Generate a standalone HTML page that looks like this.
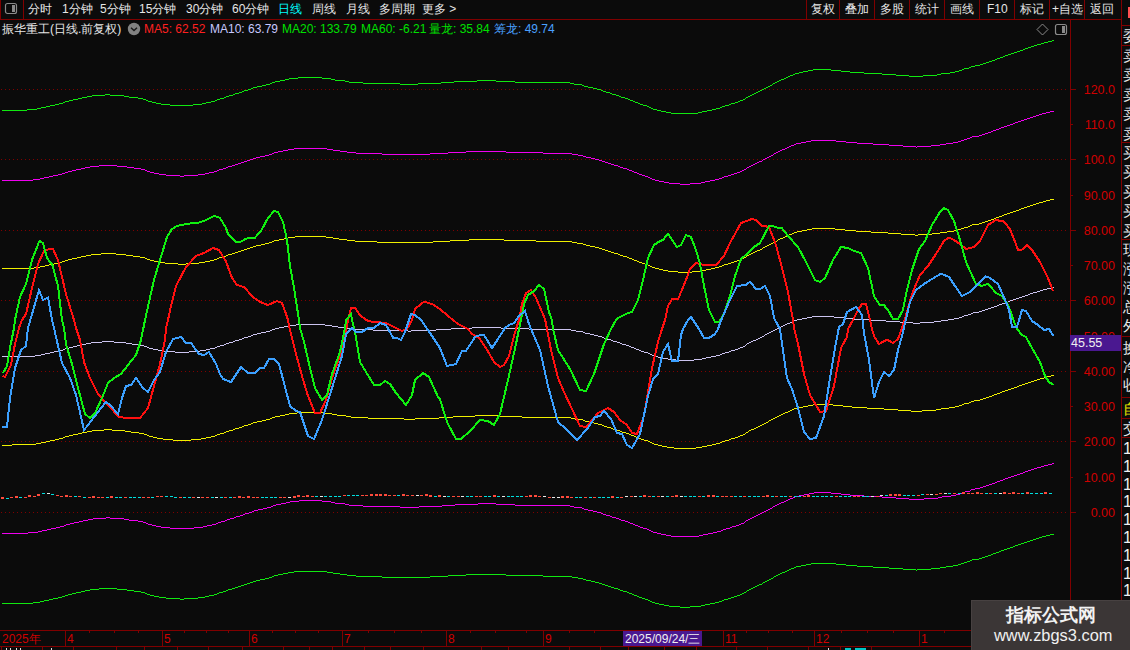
<!DOCTYPE html>
<html><head><meta charset="utf-8">
<style>
*{margin:0;padding:0;box-sizing:border-box}
html,body{width:1130px;height:650px;overflow:hidden;background:#0b0b0b;font-family:"Liberation Sans",sans-serif;font-size:12px;color:#e6e6e6;position:relative}
.abs{position:absolute;white-space:nowrap;line-height:1}
.hl{position:absolute;height:1px;background:#800000}
.vl{position:absolute;width:1px;background:#800000}
.ax{position:absolute;color:#d00000;font-size:12.5px;line-height:1;white-space:nowrap}
</style></head><body>
<svg width="1130" height="650" style="position:absolute;left:0;top:0">
<defs><pattern id="dots" x="1" y="0" width="4" height="1" patternUnits="userSpaceOnUse"><rect width="1" height="1" fill="#800000"/></pattern></defs><g>
<rect x="1" y="89" width="1066" height="1" fill="url(#dots)"/>
<rect x="1" y="159" width="1066" height="1" fill="url(#dots)"/>
<rect x="1" y="230" width="1066" height="1" fill="url(#dots)"/>
<rect x="1" y="300" width="1066" height="1" fill="url(#dots)"/>
<rect x="1" y="371" width="1066" height="1" fill="url(#dots)"/>
<rect x="1" y="441" width="1066" height="1" fill="url(#dots)"/>
<rect x="1" y="512" width="1066" height="1" fill="url(#dots)"/>
</g>
<g fill="#800000">
<rect x="1071" y="89" width="5" height="1"/>
<rect x="1071" y="124" width="2" height="1"/>
<rect x="1071" y="159" width="5" height="1"/>
<rect x="1071" y="195" width="2" height="1"/>
<rect x="1071" y="230" width="5" height="1"/>
<rect x="1071" y="265" width="2" height="1"/>
<rect x="1071" y="300" width="5" height="1"/>
<rect x="1071" y="336" width="2" height="1"/>
<rect x="1071" y="371" width="5" height="1"/>
<rect x="1071" y="406" width="2" height="1"/>
<rect x="1071" y="441" width="5" height="1"/>
<rect x="1071" y="477" width="2" height="1"/>
<rect x="1071" y="512" width="5" height="1"/>
</g>
<path d="M2 110.5h25M27 109.5h10M37 108.5h4M41 107.5h5M46 106.5h4M50 105.5h5M55 104.5h4M59 103.5h4M63 102.5h2M65 101.5h4M69 100.5h4M73 99.5h5M78 98.5h4M82 97.5h5M87 96.5h5M92 95.5h13M105 94.5h5M110 95.5h14M124 96.5h5M129 97.5h9M138 98.5h5M143 99.5h3M146 100.5h2M148 101.5h4M152 102.5h4M156 103.5h5M161 104.5h9M170 105.5h23M193 104.5h9M202 103.5h4M206 102.5h5M211 101.5h4M215 100.5h2M217 99.5h3M220 98.5h4M224 97.5h2M226 96.5h3M229 95.5h4M233 94.5h2M235 93.5h4M239 92.5h3M242 91.5h2M244 90.5h4M248 89.5h3M251 88.5h2M253 87.5h4M257 86.5h5M262 85.5h4M266 84.5h4M270 83.5h2M272 82.5h3M275 81.5h5M280 80.5h5M285 79.5h4M289 78.5h9M298 77.5h24M322 78.5h9M331 79.5h4M335 80.5h10M345 81.5h4M349 82.5h14M363 83.5h37M400 84.5h18M418 83.5h23M441 82.5h13M454 81.5h23M477 80.5h19M496 81.5h19M515 82.5h55M570 83.5h4M574 84.5h8M582 85.5h2M584 86.5h4M588 87.5h5M593 88.5h4M597 89.5h4M601 90.5h2M603 91.5h3M606 92.5h4M610 93.5h2M612 94.5h4M616 95.5h3M619 96.5h2M621 97.5h4M625 98.5h3M628 99.5h2M630 100.5h3M633 101.5h2M635 102.5h3M638 103.5h2M640 104.5h3M643 105.5h4M647 106.5h2M649 107.5h2M651 108.5h2M653 109.5h4M657 110.5h4M661 111.5h5M666 112.5h5M671 113.5h27M698 112.5h4M702 111.5h5M707 110.5h5M712 109.5h4M716 108.5h4M720 107.5h2M722 106.5h3M725 105.5h4M729 104.5h2M731 103.5h4M735 102.5h3M738 101.5h2M740 100.5h3M743 99.5h2M745 98.5h1M746 97.5h2M748 96.5h2M750 95.5h2M752 94.5h2M754 93.5h2M756 92.5h2M758 91.5h2M760 90.5h2M762 89.5h2M764 88.5h2M766 87.5h2M768 86.5h2M770 85.5h2M772 84.5h1M773 83.5h2M775 82.5h2M777 81.5h2M779 80.5h2M781 79.5h3M784 78.5h2M786 77.5h2M788 76.5h2M790 75.5h3M793 74.5h2M795 73.5h4M799 72.5h4M803 71.5h5M808 70.5h5M813 69.5h18M831 70.5h10M841 71.5h9M850 72.5h14M864 73.5h18M882 74.5h14M896 75.5h13M909 76.5h14M923 75.5h14M937 74.5h4M941 73.5h9M950 72.5h5M955 71.5h4M959 70.5h3M962 69.5h2M964 68.5h5M969 67.5h2M971 66.5h4M975 65.5h5M980 64.5h3M983 63.5h3M986 62.5h3M989 61.5h3M992 60.5h3M995 59.5h2M997 58.5h3M1000 57.5h3M1003 56.5h2M1005 55.5h3M1008 54.5h3M1011 53.5h3M1014 52.5h3M1017 51.5h3M1020 50.5h3M1023 49.5h2M1025 48.5h3M1028 47.5h3M1031 46.5h3M1034 45.5h3M1037 44.5h4M1041 43.5h3M1044 42.5h4M1048 41.5h4M1052 40.5h2" stroke="#10e810" stroke-width="1" fill="none" shape-rendering="crispEdges"/>
<path d="M2 180.5h31M33 179.5h7M40 178.5h4M44 177.5h5M49 176.5h4M53 175.5h5M58 174.5h4M62 173.5h3M65 172.5h3M68 171.5h4M72 170.5h4M76 169.5h5M81 168.5h4M85 167.5h5M90 166.5h9M99 165.5h18M117 166.5h10M127 167.5h7M134 168.5h7M141 169.5h4M145 170.5h2M147 171.5h3M150 172.5h4M154 173.5h5M159 174.5h7M166 175.5h14M180 176.5h4M184 175.5h14M198 174.5h7M205 173.5h4M209 172.5h5M214 171.5h3M217 170.5h2M219 169.5h4M223 168.5h3M226 167.5h2M228 166.5h4M232 165.5h3M235 164.5h3M238 163.5h3M241 162.5h3M244 161.5h3M247 160.5h3M250 159.5h3M253 158.5h3M256 157.5h4M260 156.5h5M265 155.5h4M269 154.5h3M272 153.5h2M274 152.5h4M278 151.5h5M283 150.5h5M288 149.5h6M294 148.5h33M327 149.5h6M333 150.5h7M340 151.5h7M347 152.5h9M356 153.5h26M382 154.5h48M430 153.5h18M448 152.5h18M466 151.5h40M506 152.5h37M543 153.5h29M572 154.5h6M578 155.5h5M583 156.5h3M586 157.5h5M591 158.5h4M595 159.5h4M599 160.5h3M602 161.5h3M605 162.5h3M608 163.5h3M611 164.5h3M614 165.5h4M618 166.5h2M620 167.5h3M623 168.5h4M627 169.5h2M629 170.5h3M632 171.5h2M634 172.5h3M637 173.5h2M639 174.5h3M642 175.5h3M645 176.5h3M648 177.5h2M650 178.5h2M652 179.5h3M655 180.5h4M659 181.5h5M664 182.5h5M669 183.5h11M680 184.5h10M690 183.5h11M701 182.5h4M705 181.5h5M710 180.5h5M715 179.5h4M719 178.5h3M722 177.5h2M724 176.5h4M728 175.5h3M731 174.5h3M734 173.5h3M737 172.5h3M740 171.5h2M742 170.5h2M744 169.5h2M746 168.5h1M747 167.5h2M749 166.5h2M751 165.5h2M753 164.5h2M755 163.5h2M757 162.5h2M759 161.5h3M762 160.5h1M763 159.5h2M765 158.5h2M767 157.5h2M769 156.5h2M771 155.5h2M773 154.5h1M774 153.5h2M776 152.5h2M778 151.5h2M780 150.5h2M782 149.5h3M785 148.5h2M787 147.5h2M789 146.5h2M791 145.5h3M794 144.5h2M796 143.5h5M801 142.5h5M806 141.5h5M811 140.5h25M836 141.5h10M846 142.5h11M857 143.5h16M873 144.5h16M889 145.5h14M903 146.5h13M916 147.5h1M917 146.5h14M931 145.5h9M940 144.5h6M946 143.5h7M953 142.5h5M958 141.5h3M961 140.5h3M964 139.5h3M967 138.5h3M970 137.5h2M972 136.5h7M979 135.5h3M982 134.5h3M985 133.5h3M988 132.5h3M991 131.5h2M993 130.5h3M996 129.5h3M999 128.5h2M1001 127.5h3M1004 126.5h3M1007 125.5h3M1010 124.5h3M1013 123.5h2M1015 122.5h3M1018 121.5h3M1021 120.5h3M1024 119.5h3M1027 118.5h3M1030 117.5h3M1033 116.5h3M1036 115.5h3M1039 114.5h3M1042 113.5h4M1046 112.5h4M1050 111.5h4" stroke="#f000f0" stroke-width="1" fill="none" shape-rendering="crispEdges"/>
<path d="M2 268.5h32M34 267.5h6M40 266.5h5M45 265.5h4M49 264.5h5M54 263.5h4M58 262.5h4M62 261.5h3M65 260.5h3M68 259.5h4M72 258.5h5M77 257.5h4M81 256.5h5M86 255.5h5M91 254.5h10M101 253.5h15M116 254.5h10M126 255.5h7M133 256.5h7M140 257.5h5M145 258.5h2M147 259.5h3M150 260.5h4M154 261.5h4M158 262.5h7M165 263.5h13M178 264.5h8M186 263.5h13M199 262.5h6M205 261.5h5M210 260.5h4M214 259.5h3M217 258.5h2M219 257.5h4M223 256.5h3M226 255.5h2M228 254.5h4M232 253.5h3M235 252.5h3M238 251.5h3M241 250.5h3M244 249.5h3M247 248.5h3M250 247.5h3M253 246.5h3M256 245.5h5M261 244.5h4M265 243.5h4M269 242.5h3M272 241.5h2M274 240.5h5M279 239.5h5M284 238.5h4M288 237.5h7M295 236.5h31M326 237.5h7M333 238.5h6M339 239.5h8M347 240.5h8M355 241.5h22M377 242.5h56M433 241.5h17M450 240.5h19M469 239.5h35M504 240.5h32M536 241.5h36M572 242.5h5M577 243.5h6M583 244.5h3M586 245.5h4M590 246.5h5M595 247.5h4M599 248.5h3M602 249.5h3M605 250.5h3M608 251.5h3M611 252.5h3M614 253.5h4M618 254.5h2M620 255.5h3M623 256.5h4M627 257.5h2M629 258.5h3M632 259.5h2M634 260.5h3M637 261.5h2M639 262.5h3M642 263.5h3M645 264.5h3M648 265.5h2M650 266.5h2M652 267.5h3M655 268.5h4M659 269.5h4M663 270.5h5M668 271.5h10M678 272.5h14M692 271.5h9M701 270.5h5M706 269.5h5M711 268.5h4M715 267.5h4M719 266.5h3M722 265.5h2M724 264.5h4M728 263.5h3M731 262.5h3M734 261.5h3M737 260.5h3M740 259.5h2M742 258.5h2M744 257.5h2M746 256.5h1M747 255.5h2M749 254.5h2M751 253.5h2M753 252.5h2M755 251.5h2M757 250.5h3M760 249.5h2M762 248.5h1M763 247.5h2M765 246.5h2M767 245.5h2M769 244.5h2M771 243.5h2M773 242.5h2M775 241.5h2M777 240.5h1M778 239.5h2M780 238.5h3M783 237.5h2M785 236.5h2M787 235.5h2M789 234.5h3M792 233.5h2M794 232.5h3M797 231.5h5M802 230.5h5M807 229.5h5M812 228.5h23M835 229.5h10M845 230.5h11M856 231.5h15M871 232.5h17M888 233.5h13M901 234.5h14M915 235.5h3M918 234.5h14M932 233.5h8M940 232.5h7M947 231.5h7M954 230.5h4M958 229.5h3M961 228.5h3M964 227.5h4M968 226.5h2M970 225.5h2M972 224.5h7M979 223.5h3M982 222.5h3M985 221.5h3M988 220.5h3M991 219.5h3M994 218.5h2M996 217.5h3M999 216.5h3M1002 215.5h2M1004 214.5h3M1007 213.5h3M1010 212.5h3M1013 211.5h3M1016 210.5h3M1019 209.5h2M1021 208.5h3M1024 207.5h3M1027 206.5h3M1030 205.5h3M1033 204.5h3M1036 203.5h3M1039 202.5h4M1043 201.5h3M1046 200.5h4M1050 199.5h4" stroke="#f0f000" stroke-width="1" fill="none" shape-rendering="crispEdges"/>
<path d="M2 356.5h33M35 355.5h6M41 354.5h4M45 353.5h5M50 352.5h4M54 351.5h5M59 350.5h4M63 349.5h2M65 348.5h4M69 347.5h4M73 346.5h4M77 345.5h5M82 344.5h4M86 343.5h5M91 342.5h11M102 341.5h12M114 342.5h12M126 343.5h6M132 344.5h8M140 345.5h4M144 346.5h3M147 347.5h2M149 348.5h4M153 349.5h5M158 350.5h6M164 351.5h11M175 352.5h14M189 351.5h11M200 350.5h6M206 349.5h4M210 348.5h5M215 347.5h2M217 346.5h3M220 345.5h4M224 344.5h2M226 343.5h3M229 342.5h4M233 341.5h2M235 340.5h4M239 339.5h3M242 338.5h2M244 337.5h4M248 336.5h3M251 335.5h2M253 334.5h4M257 333.5h4M261 332.5h5M266 331.5h4M270 330.5h2M272 329.5h3M275 328.5h4M279 327.5h5M284 326.5h5M289 325.5h7M296 324.5h29M325 325.5h7M332 326.5h6M338 327.5h8M346 328.5h7M353 329.5h20M373 330.5h35M408 331.5h3M411 330.5h25M436 329.5h15M451 328.5h21M472 327.5h29M501 328.5h28M529 329.5h42M571 330.5h5M576 331.5h7M583 332.5h2M585 333.5h5M590 334.5h4M594 335.5h4M598 336.5h4M602 337.5h2M604 338.5h3M607 339.5h4M611 340.5h2M613 341.5h4M617 342.5h3M620 343.5h2M622 344.5h4M626 345.5h3M629 346.5h2M631 347.5h3M634 348.5h2M636 349.5h3M639 350.5h2M641 351.5h3M644 352.5h4M648 353.5h2M650 354.5h2M652 355.5h2M654 356.5h4M658 357.5h5M663 358.5h5M668 359.5h8M676 360.5h18M694 359.5h8M702 358.5h4M706 357.5h5M711 356.5h5M716 355.5h4M720 354.5h2M722 353.5h3M725 352.5h4M729 351.5h2M731 350.5h4M735 349.5h3M738 348.5h2M740 347.5h3M743 346.5h2M745 345.5h1M746 344.5h1M747 343.5h2M749 342.5h2M751 341.5h2M753 340.5h3M756 339.5h2M758 338.5h2M760 337.5h2M762 336.5h2M764 335.5h1M765 334.5h2M767 333.5h2M769 332.5h2M771 331.5h2M773 330.5h2M775 329.5h2M777 328.5h2M779 327.5h2M781 326.5h2M783 325.5h2M785 324.5h2M787 323.5h3M790 322.5h2M792 321.5h2M794 320.5h3M797 319.5h5M802 318.5h5M807 317.5h5M812 316.5h22M834 317.5h10M844 318.5h10M854 319.5h15M869 320.5h17M886 321.5h14M900 322.5h13M913 323.5h7M920 322.5h14M934 321.5h7M941 320.5h7M948 319.5h6M954 318.5h5M959 317.5h3M962 316.5h2M964 315.5h4M968 314.5h3M971 313.5h2M973 312.5h6M979 311.5h3M982 310.5h3M985 309.5h3M988 308.5h3M991 307.5h3M994 306.5h3M997 305.5h2M999 304.5h3M1002 303.5h3M1005 302.5h3M1008 301.5h2M1010 300.5h3M1013 299.5h3M1016 298.5h3M1019 297.5h3M1022 296.5h3M1025 295.5h3M1028 294.5h2M1030 293.5h3M1033 292.5h4M1037 291.5h3M1040 290.5h3M1043 289.5h4M1047 288.5h4M1051 287.5h3" stroke="#ccc4f0" stroke-width="1" fill="none" shape-rendering="crispEdges"/>
<path d="M2 445.5h10M12 444.5h24M36 443.5h5M41 442.5h5M46 441.5h4M50 440.5h5M55 439.5h4M59 438.5h4M63 437.5h2M65 436.5h4M69 435.5h4M73 434.5h5M78 433.5h4M82 432.5h5M87 431.5h5M92 430.5h12M104 429.5h8M112 430.5h13M125 431.5h6M131 432.5h8M139 433.5h5M144 434.5h3M147 435.5h2M149 436.5h4M153 437.5h4M157 438.5h6M163 439.5h10M173 440.5h18M191 439.5h10M201 438.5h5M206 437.5h5M211 436.5h4M215 435.5h2M217 434.5h3M220 433.5h4M224 432.5h2M226 431.5h3M229 430.5h4M233 429.5h2M235 428.5h4M239 427.5h3M242 426.5h2M244 425.5h4M248 424.5h3M251 423.5h2M253 422.5h4M257 421.5h5M262 420.5h4M266 419.5h4M270 418.5h2M272 417.5h3M275 416.5h5M280 415.5h5M285 414.5h4M289 413.5h8M297 412.5h27M324 413.5h8M332 414.5h5M337 415.5h9M346 416.5h5M351 417.5h17M368 418.5h36M404 419.5h11M415 418.5h24M439 417.5h14M453 416.5h22M475 415.5h24M499 416.5h23M522 417.5h49M571 418.5h4M575 419.5h8M583 420.5h2M585 421.5h4M589 422.5h5M594 423.5h4M598 424.5h4M602 425.5h2M604 426.5h3M607 427.5h4M611 428.5h2M613 429.5h4M617 430.5h3M620 431.5h2M622 432.5h4M626 433.5h3M629 434.5h2M631 435.5h3M634 436.5h2M636 437.5h3M639 438.5h2M641 439.5h3M644 440.5h4M648 441.5h2M650 442.5h2M652 443.5h2M654 444.5h4M658 445.5h4M662 446.5h5M667 447.5h7M674 448.5h22M696 447.5h6M702 446.5h5M707 445.5h5M712 444.5h4M716 443.5h4M720 442.5h2M722 441.5h3M725 440.5h4M729 439.5h2M731 438.5h4M735 437.5h3M738 436.5h2M740 435.5h3M743 434.5h2M745 433.5h1M746 432.5h2M748 431.5h1M749 430.5h2M751 429.5h3M754 428.5h2M756 427.5h2M758 426.5h2M760 425.5h2M762 424.5h2M764 423.5h2M766 422.5h2M768 421.5h1M769 420.5h2M771 419.5h2M773 418.5h2M775 417.5h2M777 416.5h2M779 415.5h2M781 414.5h2M783 413.5h2M785 412.5h3M788 411.5h2M790 410.5h2M792 409.5h2M794 408.5h4M798 407.5h5M803 406.5h5M808 405.5h5M813 404.5h20M833 405.5h10M843 406.5h9M852 407.5h15M867 408.5h17M884 409.5h14M898 410.5h13M911 411.5h11M922 410.5h14M936 409.5h5M941 408.5h8M949 407.5h6M955 406.5h4M959 405.5h3M962 404.5h2M964 403.5h5M969 402.5h2M971 401.5h3M974 400.5h6M980 399.5h3M983 398.5h3M986 397.5h3M989 396.5h3M992 395.5h2M994 394.5h3M997 393.5h3M1000 392.5h2M1002 391.5h3M1005 390.5h3M1008 389.5h3M1011 388.5h3M1014 387.5h3M1017 386.5h2M1019 385.5h3M1022 384.5h3M1025 383.5h3M1028 382.5h3M1031 381.5h3M1034 380.5h3M1037 379.5h3M1040 378.5h4M1044 377.5h3M1047 376.5h4M1051 375.5h3" stroke="#f0f000" stroke-width="1" fill="none" shape-rendering="crispEdges"/>
<path d="M2 533.5h26M28 532.5h10M38 531.5h4M42 530.5h5M47 529.5h4M51 528.5h5M56 527.5h4M60 526.5h4M64 525.5h2M66 524.5h4M70 523.5h4M74 522.5h5M79 521.5h4M83 520.5h5M88 519.5h5M93 518.5h13M106 517.5h4M110 518.5h14M124 519.5h5M129 520.5h9M138 521.5h5M143 522.5h3M146 523.5h2M148 524.5h4M152 525.5h4M156 526.5h5M161 527.5h9M170 528.5h24M194 527.5h9M203 526.5h4M207 525.5h5M212 524.5h4M216 523.5h2M218 522.5h3M221 521.5h4M225 520.5h2M227 519.5h3M230 518.5h4M234 517.5h2M236 516.5h4M240 515.5h3M243 514.5h2M245 513.5h4M249 512.5h3M252 511.5h2M254 510.5h4M258 509.5h5M263 508.5h4M267 507.5h4M271 506.5h2M273 505.5h3M276 504.5h5M281 503.5h5M286 502.5h4M290 501.5h9M299 500.5h23M322 501.5h9M331 502.5h4M335 503.5h10M345 504.5h4M349 505.5h14M363 506.5h37M400 507.5h19M419 506.5h23M442 505.5h13M455 504.5h23M478 503.5h18M496 504.5h19M515 505.5h55M570 506.5h4M574 507.5h8M582 508.5h2M584 509.5h4M588 510.5h5M593 511.5h4M597 512.5h4M601 513.5h2M603 514.5h3M606 515.5h4M610 516.5h2M612 517.5h4M616 518.5h3M619 519.5h2M621 520.5h4M625 521.5h3M628 522.5h2M630 523.5h3M633 524.5h2M635 525.5h3M638 526.5h2M640 527.5h3M643 528.5h4M647 529.5h2M649 530.5h2M651 531.5h2M653 532.5h4M657 533.5h4M661 534.5h5M666 535.5h5M671 536.5h28M699 535.5h4M703 534.5h5M708 533.5h5M713 532.5h4M717 531.5h4M721 530.5h2M723 529.5h3M726 528.5h4M730 527.5h2M732 526.5h4M736 525.5h3M739 524.5h2M741 523.5h3M744 522.5h1M745 521.5h1M746 520.5h2M748 519.5h2M750 518.5h2M752 517.5h2M754 516.5h2M756 515.5h2M758 514.5h2M760 513.5h2M762 512.5h2M764 511.5h2M766 510.5h2M768 509.5h2M770 508.5h2M772 507.5h1M773 506.5h2M775 505.5h2M777 504.5h2M779 503.5h2M781 502.5h3M784 501.5h2M786 500.5h2M788 499.5h2M790 498.5h3M793 497.5h2M795 496.5h4M799 495.5h5M804 494.5h5M809 493.5h5M814 492.5h17M831 493.5h10M841 494.5h9M850 495.5h14M864 496.5h18M882 497.5h14M896 498.5h13M909 499.5h15M924 498.5h14M938 497.5h4M942 496.5h9M951 495.5h5M956 494.5h4M960 493.5h3M963 492.5h2M965 491.5h5M970 490.5h1M971 489.5h4M975 488.5h5M980 487.5h3M983 486.5h3M986 485.5h3M989 484.5h3M992 483.5h3M995 482.5h2M997 481.5h3M1000 480.5h3M1003 479.5h2M1005 478.5h3M1008 477.5h3M1011 476.5h3M1014 475.5h3M1017 474.5h3M1020 473.5h3M1023 472.5h2M1025 471.5h3M1028 470.5h3M1031 469.5h3M1034 468.5h3M1037 467.5h4M1041 466.5h3M1044 465.5h4M1048 464.5h4M1052 463.5h2" stroke="#f000f0" stroke-width="1" fill="none" shape-rendering="crispEdges"/>
<path d="M2 603.5h31M33 602.5h7M40 601.5h4M44 600.5h5M49 599.5h4M53 598.5h5M58 597.5h4M62 596.5h3M65 595.5h3M68 594.5h4M72 593.5h4M76 592.5h5M81 591.5h4M85 590.5h5M90 589.5h9M99 588.5h18M117 589.5h10M127 590.5h7M134 591.5h7M141 592.5h4M145 593.5h2M147 594.5h3M150 595.5h4M154 596.5h5M159 597.5h7M166 598.5h14M180 599.5h4M184 598.5h14M198 597.5h7M205 596.5h4M209 595.5h5M214 594.5h3M217 593.5h2M219 592.5h4M223 591.5h3M226 590.5h2M228 589.5h4M232 588.5h3M235 587.5h3M238 586.5h3M241 585.5h3M244 584.5h3M247 583.5h3M250 582.5h3M253 581.5h3M256 580.5h4M260 579.5h5M265 578.5h4M269 577.5h3M272 576.5h2M274 575.5h4M278 574.5h5M283 573.5h5M288 572.5h6M294 571.5h33M327 572.5h6M333 573.5h7M340 574.5h7M347 575.5h9M356 576.5h26M382 577.5h48M430 576.5h18M448 575.5h18M466 574.5h40M506 575.5h37M543 576.5h29M572 577.5h6M578 578.5h5M583 579.5h3M586 580.5h5M591 581.5h4M595 582.5h4M599 583.5h3M602 584.5h3M605 585.5h3M608 586.5h3M611 587.5h3M614 588.5h4M618 589.5h2M620 590.5h3M623 591.5h4M627 592.5h2M629 593.5h3M632 594.5h2M634 595.5h3M637 596.5h2M639 597.5h3M642 598.5h3M645 599.5h3M648 600.5h2M650 601.5h2M652 602.5h3M655 603.5h4M659 604.5h5M664 605.5h5M669 606.5h11M680 607.5h10M690 606.5h11M701 605.5h4M705 604.5h5M710 603.5h5M715 602.5h4M719 601.5h3M722 600.5h2M724 599.5h4M728 598.5h3M731 597.5h3M734 596.5h3M737 595.5h3M740 594.5h2M742 593.5h2M744 592.5h2M746 591.5h1M747 590.5h2M749 589.5h2M751 588.5h2M753 587.5h2M755 586.5h2M757 585.5h2M759 584.5h3M762 583.5h1M763 582.5h2M765 581.5h2M767 580.5h2M769 579.5h2M771 578.5h2M773 577.5h1M774 576.5h2M776 575.5h2M778 574.5h2M780 573.5h2M782 572.5h3M785 571.5h2M787 570.5h2M789 569.5h2M791 568.5h3M794 567.5h2M796 566.5h5M801 565.5h5M806 564.5h5M811 563.5h25M836 564.5h10M846 565.5h11M857 566.5h16M873 567.5h16M889 568.5h14M903 569.5h13M916 570.5h1M917 569.5h14M931 568.5h9M940 567.5h6M946 566.5h7M953 565.5h5M958 564.5h3M961 563.5h3M964 562.5h3M967 561.5h3M970 560.5h2M972 559.5h7M979 558.5h3M982 557.5h3M985 556.5h3M988 555.5h3M991 554.5h2M993 553.5h3M996 552.5h3M999 551.5h2M1001 550.5h3M1004 549.5h3M1007 548.5h3M1010 547.5h3M1013 546.5h2M1015 545.5h3M1018 544.5h3M1021 543.5h3M1024 542.5h3M1027 541.5h3M1030 540.5h3M1033 539.5h3M1036 538.5h3M1039 537.5h3M1042 536.5h4M1046 535.5h4M1050 534.5h4" stroke="#10e810" stroke-width="1" fill="none" shape-rendering="crispEdges"/>
<polyline points="2.4,376.0 5.0,377.0 11.0,365.0 15.0,344.0 19.0,328.0 22.0,320.0 26.0,314.0 32.0,288.0 38.0,264.0 44.0,251.0 50.0,248.6 53.0,249.0 58.0,260.0 66.0,294.0 74.0,320.0 76.0,328.0 80.0,340.0 84.0,362.0 90.0,378.0 98.0,394.0 106.0,403.0 119.0,417.0 130.0,418.4 140.0,418.0 148.0,408.0 154.0,386.0 160.0,364.0 165.0,340.0 166.0,328.0 168.0,320.0 171.0,306.0 176.0,286.0 186.0,267.0 196.0,256.0 204.0,253.0 213.0,248.0 219.0,250.0 226.0,261.5 232.0,278.0 237.0,285.0 244.0,287.0 253.0,297.0 260.0,302.0 268.0,305.0 277.0,301.0 282.0,303.0 286.0,314.0 288.0,320.0 290.0,330.0 296.0,354.0 302.0,376.0 308.0,396.0 315.0,413.0 320.0,413.0 326.0,400.0 332.0,378.0 340.0,356.0 345.0,336.0 348.0,320.0 351.0,308.0 355.0,308.0 360.0,315.0 366.0,320.0 374.0,322.5 380.0,322.4 386.0,323.0 396.0,328.0 402.0,331.0 407.0,329.0 412.0,320.0 415.0,309.0 424.0,301.6 432.0,304.0 440.0,309.0 448.0,316.0 453.0,320.0 458.0,324.0 468.0,329.0 472.0,334.0 479.0,338.0 486.0,348.0 494.0,362.0 500.0,367.0 504.0,365.0 509.0,356.0 514.0,336.0 516.0,329.0 519.0,320.0 522.0,304.0 526.0,293.0 531.0,290.0 536.0,298.0 542.0,312.0 545.0,319.0 547.0,329.0 551.0,350.0 558.0,378.0 564.0,392.0 580.0,426.0 586.0,427.0 598.0,413.0 608.0,408.0 614.0,412.0 620.0,420.0 627.0,425.0 632.0,433.0 637.0,434.0 644.0,416.0 652.0,368.0 658.0,342.0 662.0,329.0 665.0,320.0 668.0,306.0 672.0,299.4 678.0,299.4 686.0,280.0 690.0,269.0 696.0,263.0 704.0,265.0 716.0,265.0 724.0,256.0 730.0,243.0 741.0,223.0 752.0,219.0 756.0,220.0 762.0,225.6 769.0,227.0 776.0,245.0 782.0,268.0 788.0,292.0 793.0,320.0 794.0,328.0 798.0,344.0 804.0,374.0 810.0,395.0 820.0,412.0 826.0,411.0 834.0,386.0 841.0,348.0 847.0,337.0 848.0,329.0 853.0,320.0 858.0,310.0 862.0,304.0 866.0,304.0 870.0,320.0 872.0,329.0 874.0,336.0 879.0,344.0 887.0,339.6 893.0,343.0 898.0,339.0 902.0,328.0 905.0,319.0 912.0,294.0 920.0,275.0 928.0,266.0 936.0,254.0 944.0,241.0 949.0,237.6 954.0,240.0 960.0,244.0 966.0,249.0 974.0,247.0 980.0,241.0 988.0,225.0 996.0,220.0 1004.0,221.6 1010.0,229.0 1018.0,249.6 1022.0,249.6 1027.0,245.0 1032.0,250.0 1040.0,262.0 1048.0,278.0 1053.0,291.0" fill="none" stroke="#ff1010" stroke-width="2" shape-rendering="crispEdges"/>
<polyline points="3.0,373.0 7.0,366.0 10.0,348.0 14.0,328.0 15.0,320.0 20.0,297.0 26.0,284.0 32.0,260.0 39.4,241.0 43.0,243.0 47.0,258.0 52.4,265.0 58.0,286.0 62.0,320.0 64.0,328.0 66.0,344.0 72.0,364.0 78.0,388.0 85.0,414.0 90.0,418.0 95.0,413.0 102.0,398.0 108.0,383.0 114.0,378.0 121.0,374.0 128.0,365.0 136.0,355.0 141.0,340.0 143.0,330.0 145.0,320.0 149.0,302.0 154.0,280.0 160.0,260.0 167.0,237.0 172.0,229.0 177.0,226.0 186.0,224.0 200.0,222.4 206.0,220.0 214.0,216.0 218.0,217.0 220.0,218.0 226.0,228.0 228.0,234.0 236.0,242.0 241.0,241.6 246.0,238.6 255.0,237.6 261.0,231.0 268.0,218.0 274.0,211.0 278.0,212.0 283.0,222.0 287.0,240.0 290.0,266.0 294.0,288.0 299.0,320.0 300.0,328.0 304.0,342.0 310.0,368.0 315.0,388.0 322.0,400.0 327.0,395.0 332.0,374.0 340.0,352.0 345.0,328.0 346.0,320.0 351.0,314.0 352.0,320.0 354.0,328.0 355.0,332.0 360.0,362.0 366.0,372.0 374.0,385.0 380.0,385.0 385.0,381.0 390.0,384.0 396.0,393.0 406.0,405.0 412.0,395.0 415.0,380.0 423.0,373.0 429.0,377.0 438.0,397.0 440.0,399.0 446.0,419.0 448.0,424.0 456.0,439.0 461.0,439.0 470.0,431.0 480.0,420.0 488.0,421.0 494.0,425.0 500.0,414.0 508.0,380.0 516.0,344.0 519.0,329.0 521.0,320.0 524.0,304.0 528.0,295.0 534.0,291.0 539.0,285.0 544.0,289.0 549.0,312.0 552.0,320.0 553.0,329.0 558.0,350.0 570.0,369.0 580.0,390.0 586.0,391.0 594.0,374.0 604.0,344.0 611.0,329.0 616.0,320.0 618.0,318.0 628.0,313.0 632.0,312.0 638.0,300.0 643.0,280.0 648.0,258.0 654.0,245.0 660.0,241.0 663.0,240.0 666.0,236.0 668.0,234.0 677.0,247.0 681.0,245.0 686.0,235.0 691.0,237.0 696.0,250.0 700.0,264.0 704.0,286.0 709.0,310.0 715.0,322.0 719.0,322.0 724.0,314.0 730.0,296.0 735.0,276.0 741.0,259.0 748.0,253.0 754.0,247.0 760.0,243.0 769.0,226.0 773.0,226.0 778.0,228.0 782.0,228.4 788.0,236.0 798.0,247.0 806.0,262.0 815.0,280.0 820.0,282.0 825.0,278.0 833.0,260.0 841.0,247.0 848.0,248.0 854.0,251.0 861.0,253.0 868.0,268.0 874.0,296.0 879.0,304.0 880.0,305.0 884.0,305.0 886.0,308.0 888.0,310.0 893.0,319.0 898.0,319.0 903.0,310.0 906.0,294.0 912.0,270.0 919.0,249.0 925.0,241.0 932.0,225.0 940.0,212.0 943.6,208.0 948.0,210.0 954.0,221.0 960.0,240.0 966.0,262.0 976.0,284.0 982.0,286.0 988.0,283.6 996.0,293.0 1002.0,296.0 1008.0,305.0 1010.0,310.0 1013.0,319.0 1017.0,329.0 1022.0,335.0 1026.0,337.0 1032.0,348.0 1040.0,362.0 1045.0,376.0 1049.0,382.0 1053.6,385.0" fill="none" stroke="#10f010" stroke-width="2" shape-rendering="crispEdges"/>
<polyline points="2.4,427.0 7.0,427.0 10.0,398.0 15.0,368.0 21.0,350.0 26.0,346.0 28.0,328.0 39.0,290.0 43.0,300.0 48.0,297.4 52.0,320.0 54.0,328.0 59.0,350.0 62.0,363.0 70.0,378.0 76.0,395.0 84.0,430.0 88.0,425.0 98.0,412.0 106.0,402.0 110.0,405.0 118.0,414.0 122.0,398.0 126.0,386.0 131.0,385.0 136.0,378.0 143.0,388.0 148.0,392.0 154.0,380.0 160.0,372.0 166.0,352.0 173.0,339.0 181.0,337.0 186.0,343.0 191.0,343.0 199.0,354.0 204.0,355.0 209.0,352.0 216.0,364.0 220.0,374.0 223.0,379.0 231.0,382.0 241.0,367.0 248.0,373.0 255.0,373.0 260.0,368.0 264.0,368.0 269.0,359.0 274.0,359.0 279.0,364.0 290.0,406.0 296.0,411.0 300.0,412.0 308.0,436.0 314.0,439.0 322.0,420.0 332.0,388.0 342.0,356.0 346.0,334.0 352.0,328.0 356.0,332.0 362.0,332.0 368.0,328.0 374.0,328.0 380.0,323.0 386.0,325.0 393.0,337.6 397.0,338.0 401.0,340.0 405.0,332.0 409.0,320.0 411.0,314.0 415.0,315.0 421.0,320.0 428.0,330.0 436.0,342.0 440.0,348.0 447.0,366.0 456.0,364.0 462.0,351.0 466.0,351.0 475.0,337.0 480.0,335.0 484.0,335.0 492.0,348.0 498.0,339.0 505.0,328.0 509.0,325.0 514.0,323.0 519.0,316.0 525.0,311.0 529.0,324.0 531.0,329.0 540.0,350.0 548.0,386.0 558.0,422.0 566.0,429.0 577.0,440.0 588.0,428.0 595.0,417.0 600.0,416.0 604.0,411.0 611.0,419.0 617.0,433.0 622.0,434.0 627.0,445.0 632.0,448.0 640.0,434.0 648.0,396.0 653.0,379.0 658.0,374.0 663.0,352.0 668.0,344.0 672.0,361.0 678.0,361.0 681.0,335.0 683.0,329.0 688.0,320.0 691.0,317.0 699.0,329.0 704.0,338.0 709.0,338.0 715.0,334.0 718.0,329.0 720.0,323.0 729.0,302.0 737.0,286.0 746.0,285.0 750.0,281.6 756.0,289.0 760.0,289.0 765.0,286.0 770.0,296.0 774.0,318.0 780.0,329.0 787.0,378.0 792.0,389.0 798.0,408.0 804.0,432.0 810.0,439.0 816.0,438.0 824.0,416.0 830.0,378.0 835.0,348.0 839.0,327.0 843.0,324.0 847.0,312.0 856.0,307.0 862.0,315.0 864.0,333.0 869.0,360.0 874.0,398.0 879.0,382.0 884.0,372.0 889.0,376.0 894.0,370.0 898.0,350.0 902.0,336.0 906.0,319.0 910.0,302.0 916.0,290.0 924.0,284.0 932.0,279.0 941.0,273.6 949.0,277.0 955.0,286.0 962.0,296.0 970.0,292.0 978.0,284.0 986.0,276.4 990.0,278.0 998.0,284.0 1006.0,302.0 1009.0,310.0 1012.0,327.0 1017.0,327.0 1022.0,310.0 1026.0,311.0 1032.0,321.0 1038.0,325.0 1044.0,330.0 1049.0,329.0 1053.6,336.0" fill="none" stroke="#3ca0ff" stroke-width="2" shape-rendering="crispEdges"/>
<g shape-rendering="crispEdges"><rect x="1" y="497" width="3" height="2" fill="#ff4a3c"/><rect x="6" y="498" width="3" height="1" fill="#00dede"/><rect x="10" y="497" width="3" height="1" fill="#ff4a3c"/><rect x="15" y="496" width="3" height="2" fill="#ff4a3c"/><rect x="19" y="497" width="3" height="1" fill="#00dede"/><rect x="24" y="497" width="3" height="1" fill="#ff4a3c"/><rect x="28" y="495" width="3" height="2" fill="#ff4a3c"/><rect x="33" y="496" width="3" height="1" fill="#ff4a3c"/><rect x="37" y="494" width="3" height="2" fill="#ff4a3c"/><rect x="42" y="493" width="3" height="1" fill="#00dede"/><rect x="47" y="493" width="3" height="1" fill="#e8e8e8"/><rect x="51" y="494" width="3" height="1" fill="#00dede"/><rect x="56" y="495" width="3" height="1" fill="#ff4a3c"/><rect x="60" y="496" width="3" height="1" fill="#ff4a3c"/><rect x="65" y="495" width="3" height="2" fill="#ff4a3c"/><rect x="69" y="496" width="3" height="1" fill="#ff4a3c"/><rect x="74" y="496" width="3" height="1" fill="#00dede"/><rect x="78" y="496" width="3" height="1" fill="#ff4a3c"/><rect x="83" y="497" width="3" height="1" fill="#00dede"/><rect x="88" y="497" width="3" height="1" fill="#ff4a3c"/><rect x="92" y="496" width="3" height="2" fill="#ff4a3c"/><rect x="97" y="497" width="3" height="1" fill="#ff4a3c"/><rect x="101" y="497" width="3" height="1" fill="#ff4a3c"/><rect x="106" y="497" width="3" height="1" fill="#00dede"/><rect x="110" y="496" width="3" height="2" fill="#ff4a3c"/><rect x="115" y="497" width="3" height="1" fill="#00dede"/><rect x="119" y="497" width="3" height="1" fill="#00dede"/><rect x="124" y="497" width="3" height="1" fill="#ff4a3c"/><rect x="129" y="497" width="3" height="1" fill="#00dede"/><rect x="133" y="497" width="3" height="1" fill="#00dede"/><rect x="138" y="497" width="3" height="1" fill="#00dede"/><rect x="142" y="497" width="3" height="1" fill="#ff4a3c"/><rect x="147" y="497" width="3" height="1" fill="#ff4a3c"/><rect x="151" y="497" width="3" height="1" fill="#00dede"/><rect x="156" y="496" width="3" height="1" fill="#ff4a3c"/><rect x="160" y="496" width="3" height="1" fill="#ff4a3c"/><rect x="165" y="496" width="3" height="1" fill="#00dede"/><rect x="170" y="496" width="3" height="1" fill="#00dede"/><rect x="174" y="497" width="3" height="1" fill="#00dede"/><rect x="179" y="497" width="3" height="1" fill="#ff4a3c"/><rect x="183" y="497" width="3" height="1" fill="#00dede"/><rect x="188" y="497" width="3" height="1" fill="#00dede"/><rect x="192" y="497" width="3" height="1" fill="#ff4a3c"/><rect x="197" y="497" width="3" height="1" fill="#e8e8e8"/><rect x="201" y="497" width="3" height="1" fill="#ff4a3c"/><rect x="206" y="497" width="3" height="1" fill="#ff4a3c"/><rect x="211" y="497" width="3" height="1" fill="#00dede"/><rect x="215" y="497" width="3" height="1" fill="#e8e8e8"/><rect x="220" y="497" width="3" height="1" fill="#00dede"/><rect x="224" y="497" width="3" height="1" fill="#ff4a3c"/><rect x="229" y="497" width="3" height="1" fill="#00dede"/><rect x="233" y="497" width="3" height="1" fill="#ff4a3c"/><rect x="238" y="496" width="3" height="2" fill="#ff4a3c"/><rect x="242" y="497" width="3" height="1" fill="#ff4a3c"/><rect x="247" y="496" width="3" height="2" fill="#ff4a3c"/><rect x="252" y="497" width="3" height="1" fill="#ff4a3c"/><rect x="256" y="497" width="3" height="1" fill="#ff4a3c"/><rect x="261" y="497" width="3" height="1" fill="#00dede"/><rect x="265" y="497" width="3" height="1" fill="#00dede"/><rect x="270" y="497" width="3" height="1" fill="#00dede"/><rect x="274" y="497" width="3" height="1" fill="#00dede"/><rect x="279" y="497" width="3" height="1" fill="#ff4a3c"/><rect x="283" y="497" width="3" height="1" fill="#ff4a3c"/><rect x="288" y="497" width="3" height="1" fill="#e8e8e8"/><rect x="293" y="496" width="3" height="2" fill="#ff4a3c"/><rect x="297" y="495" width="3" height="2" fill="#ff4a3c"/><rect x="302" y="496" width="3" height="1" fill="#ff4a3c"/><rect x="306" y="495" width="3" height="2" fill="#ff4a3c"/><rect x="311" y="496" width="3" height="1" fill="#ff4a3c"/><rect x="315" y="496" width="3" height="1" fill="#00dede"/><rect x="320" y="496" width="3" height="1" fill="#e8e8e8"/><rect x="324" y="496" width="3" height="1" fill="#00dede"/><rect x="329" y="496" width="3" height="1" fill="#00dede"/><rect x="334" y="496" width="3" height="1" fill="#00dede"/><rect x="338" y="496" width="3" height="1" fill="#00dede"/><rect x="343" y="495" width="3" height="1" fill="#ff4a3c"/><rect x="347" y="495" width="3" height="1" fill="#00dede"/><rect x="352" y="495" width="3" height="1" fill="#00dede"/><rect x="356" y="495" width="3" height="1" fill="#00dede"/><rect x="361" y="495" width="3" height="1" fill="#ff4a3c"/><rect x="365" y="495" width="3" height="1" fill="#ff4a3c"/><rect x="370" y="494" width="3" height="2" fill="#ff4a3c"/><rect x="375" y="494" width="3" height="2" fill="#ff4a3c"/><rect x="379" y="494" width="3" height="2" fill="#ff4a3c"/><rect x="384" y="494" width="3" height="2" fill="#ff4a3c"/><rect x="388" y="495" width="3" height="1" fill="#ff4a3c"/><rect x="393" y="495" width="3" height="1" fill="#ff4a3c"/><rect x="397" y="495" width="3" height="1" fill="#00dede"/><rect x="402" y="494" width="3" height="2" fill="#ff4a3c"/><rect x="406" y="495" width="3" height="1" fill="#ff4a3c"/><rect x="411" y="495" width="3" height="1" fill="#ff4a3c"/><rect x="416" y="495" width="3" height="1" fill="#e8e8e8"/><rect x="420" y="495" width="3" height="1" fill="#ff4a3c"/><rect x="425" y="494" width="3" height="2" fill="#ff4a3c"/><rect x="429" y="495" width="3" height="2" fill="#ff4a3c"/><rect x="434" y="496" width="3" height="1" fill="#00dede"/><rect x="438" y="495" width="3" height="2" fill="#ff4a3c"/><rect x="443" y="496" width="3" height="1" fill="#e8e8e8"/><rect x="447" y="496" width="3" height="1" fill="#00dede"/><rect x="452" y="496" width="3" height="1" fill="#ff4a3c"/><rect x="457" y="496" width="3" height="1" fill="#ff4a3c"/><rect x="461" y="496" width="3" height="1" fill="#e8e8e8"/><rect x="466" y="496" width="3" height="1" fill="#00dede"/><rect x="470" y="496" width="3" height="1" fill="#00dede"/><rect x="475" y="496" width="3" height="1" fill="#ff4a3c"/><rect x="479" y="496" width="3" height="1" fill="#ff4a3c"/><rect x="484" y="496" width="3" height="1" fill="#00dede"/><rect x="488" y="496" width="3" height="1" fill="#00dede"/><rect x="493" y="495" width="3" height="2" fill="#ff4a3c"/><rect x="497" y="496" width="3" height="1" fill="#00dede"/><rect x="502" y="496" width="3" height="1" fill="#e8e8e8"/><rect x="507" y="496" width="3" height="1" fill="#00dede"/><rect x="511" y="496" width="3" height="1" fill="#00dede"/><rect x="516" y="496" width="3" height="1" fill="#00dede"/><rect x="520" y="496" width="3" height="1" fill="#00dede"/><rect x="525" y="496" width="3" height="1" fill="#ff4a3c"/><rect x="529" y="495" width="3" height="2" fill="#ff4a3c"/><rect x="534" y="495" width="3" height="2" fill="#ff4a3c"/><rect x="538" y="496" width="3" height="1" fill="#ff4a3c"/><rect x="543" y="496" width="3" height="1" fill="#e8e8e8"/><rect x="548" y="497" width="3" height="1" fill="#ff4a3c"/><rect x="552" y="497" width="3" height="1" fill="#e8e8e8"/><rect x="557" y="497" width="3" height="1" fill="#e8e8e8"/><rect x="561" y="496" width="3" height="2" fill="#ff4a3c"/><rect x="566" y="496" width="3" height="2" fill="#ff4a3c"/><rect x="570" y="497" width="3" height="1" fill="#ff4a3c"/><rect x="575" y="497" width="3" height="1" fill="#00dede"/><rect x="579" y="497" width="3" height="1" fill="#00dede"/><rect x="584" y="497" width="3" height="1" fill="#ff4a3c"/><rect x="589" y="497" width="3" height="1" fill="#00dede"/><rect x="593" y="497" width="3" height="1" fill="#ff4a3c"/><rect x="598" y="497" width="3" height="1" fill="#00dede"/><rect x="602" y="497" width="3" height="1" fill="#00dede"/><rect x="607" y="497" width="3" height="1" fill="#00dede"/><rect x="611" y="496" width="3" height="2" fill="#ff4a3c"/><rect x="616" y="497" width="3" height="1" fill="#00dede"/><rect x="620" y="497" width="3" height="1" fill="#ff4a3c"/><rect x="625" y="496" width="3" height="1" fill="#e8e8e8"/><rect x="630" y="496" width="3" height="1" fill="#ff4a3c"/><rect x="634" y="496" width="3" height="1" fill="#e8e8e8"/><rect x="639" y="496" width="3" height="1" fill="#00dede"/><rect x="643" y="495" width="3" height="2" fill="#ff4a3c"/><rect x="648" y="496" width="3" height="1" fill="#ff4a3c"/><rect x="652" y="496" width="3" height="1" fill="#00dede"/><rect x="657" y="496" width="3" height="1" fill="#ff4a3c"/><rect x="661" y="496" width="3" height="1" fill="#e8e8e8"/><rect x="666" y="496" width="3" height="1" fill="#00dede"/><rect x="671" y="496" width="3" height="1" fill="#ff4a3c"/><rect x="675" y="495" width="3" height="2" fill="#ff4a3c"/><rect x="680" y="496" width="3" height="1" fill="#e8e8e8"/><rect x="684" y="496" width="3" height="1" fill="#00dede"/><rect x="689" y="496" width="3" height="1" fill="#00dede"/><rect x="693" y="496" width="3" height="1" fill="#00dede"/><rect x="698" y="496" width="3" height="1" fill="#ff4a3c"/><rect x="702" y="496" width="3" height="1" fill="#00dede"/><rect x="707" y="495" width="3" height="2" fill="#ff4a3c"/><rect x="712" y="495" width="3" height="2" fill="#ff4a3c"/><rect x="716" y="496" width="3" height="1" fill="#00dede"/><rect x="721" y="496" width="3" height="1" fill="#ff4a3c"/><rect x="725" y="496" width="3" height="1" fill="#ff4a3c"/><rect x="730" y="496" width="3" height="1" fill="#ff4a3c"/><rect x="734" y="496" width="3" height="1" fill="#00dede"/><rect x="739" y="496" width="3" height="1" fill="#00dede"/><rect x="743" y="496" width="3" height="1" fill="#ff4a3c"/><rect x="748" y="496" width="3" height="1" fill="#00dede"/><rect x="753" y="496" width="3" height="1" fill="#00dede"/><rect x="757" y="496" width="3" height="1" fill="#00dede"/><rect x="762" y="496" width="3" height="1" fill="#ff4a3c"/><rect x="766" y="495" width="3" height="2" fill="#ff4a3c"/><rect x="771" y="496" width="3" height="1" fill="#00dede"/><rect x="775" y="496" width="3" height="1" fill="#ff4a3c"/><rect x="780" y="496" width="3" height="1" fill="#00dede"/><rect x="784" y="496" width="3" height="1" fill="#00dede"/><rect x="789" y="496" width="3" height="1" fill="#ff4a3c"/><rect x="794" y="496" width="3" height="1" fill="#00dede"/><rect x="798" y="496" width="3" height="1" fill="#00dede"/><rect x="803" y="496" width="3" height="1" fill="#ff4a3c"/><rect x="807" y="495" width="3" height="2" fill="#ff4a3c"/><rect x="812" y="496" width="3" height="1" fill="#00dede"/><rect x="816" y="496" width="3" height="1" fill="#00dede"/><rect x="821" y="496" width="3" height="1" fill="#00dede"/><rect x="825" y="496" width="3" height="1" fill="#00dede"/><rect x="830" y="496" width="3" height="1" fill="#00dede"/><rect x="835" y="496" width="3" height="1" fill="#ff4a3c"/><rect x="839" y="496" width="3" height="1" fill="#00dede"/><rect x="844" y="496" width="3" height="1" fill="#00dede"/><rect x="848" y="496" width="3" height="1" fill="#00dede"/><rect x="853" y="496" width="3" height="1" fill="#ff4a3c"/><rect x="857" y="496" width="3" height="1" fill="#ff4a3c"/><rect x="862" y="496" width="3" height="1" fill="#00dede"/><rect x="866" y="496" width="3" height="1" fill="#00dede"/><rect x="871" y="496" width="3" height="1" fill="#e8e8e8"/><rect x="876" y="496" width="3" height="1" fill="#ff4a3c"/><rect x="880" y="495" width="3" height="1" fill="#e8e8e8"/><rect x="885" y="495" width="3" height="1" fill="#00dede"/><rect x="889" y="494" width="3" height="2" fill="#ff4a3c"/><rect x="894" y="494" width="3" height="2" fill="#ff4a3c"/><rect x="898" y="494" width="3" height="2" fill="#ff4a3c"/><rect x="903" y="495" width="3" height="1" fill="#00dede"/><rect x="907" y="495" width="3" height="1" fill="#00dede"/><rect x="912" y="495" width="3" height="1" fill="#00dede"/><rect x="917" y="495" width="3" height="1" fill="#ff4a3c"/><rect x="921" y="494" width="3" height="1" fill="#00dede"/><rect x="926" y="494" width="3" height="1" fill="#ff4a3c"/><rect x="930" y="494" width="3" height="1" fill="#e8e8e8"/><rect x="935" y="494" width="3" height="1" fill="#ff4a3c"/><rect x="939" y="493" width="3" height="1" fill="#ff4a3c"/><rect x="944" y="493" width="3" height="1" fill="#e8e8e8"/><rect x="948" y="493" width="3" height="1" fill="#00dede"/><rect x="953" y="493" width="3" height="1" fill="#ff4a3c"/><rect x="958" y="493" width="3" height="1" fill="#00dede"/><rect x="962" y="492" width="3" height="2" fill="#ff4a3c"/><rect x="967" y="493" width="3" height="1" fill="#ff4a3c"/><rect x="971" y="493" width="3" height="1" fill="#ff4a3c"/><rect x="976" y="492" width="3" height="2" fill="#ff4a3c"/><rect x="980" y="493" width="3" height="1" fill="#ff4a3c"/><rect x="985" y="493" width="3" height="1" fill="#00dede"/><rect x="989" y="493" width="3" height="1" fill="#ff4a3c"/><rect x="994" y="493" width="3" height="1" fill="#00dede"/><rect x="999" y="493" width="3" height="1" fill="#e8e8e8"/><rect x="1003" y="492" width="3" height="2" fill="#ff4a3c"/><rect x="1008" y="493" width="3" height="1" fill="#ff4a3c"/><rect x="1012" y="492" width="3" height="2" fill="#ff4a3c"/><rect x="1017" y="493" width="3" height="1" fill="#ff4a3c"/><rect x="1021" y="493" width="3" height="1" fill="#00dede"/><rect x="1026" y="492" width="3" height="2" fill="#ff4a3c"/><rect x="1030" y="493" width="3" height="1" fill="#00dede"/><rect x="1035" y="493" width="3" height="1" fill="#00dede"/><rect x="1040" y="493" width="3" height="1" fill="#00dede"/><rect x="1044" y="492" width="3" height="2" fill="#ff4a3c"/><rect x="1049" y="493" width="3" height="1" fill="#00dede"/></g></svg>
<!-- toolbar -->
<div class="hl" style="left:0;top:19px;width:1121px"></div>
<div class="vl" style="left:0;top:0;height:19px"></div>
<div class="vl" style="left:23px;top:0;height:19px"></div>
<div class="abs" style="left:28px;top:3px">分时</div>
<div class="abs" style="left:62px;top:3px">1分钟</div>
<div class="abs" style="left:100px;top:3px">5分钟</div>
<div class="abs" style="left:139px;top:3px">15分钟</div>
<div class="abs" style="left:186px;top:3px">30分钟</div>
<div class="abs" style="left:232px;top:3px">60分钟</div>
<div class="abs" style="left:278px;top:3px;color:#00ffff">日线</div>
<div class="abs" style="left:312px;top:3px">周线</div>
<div class="abs" style="left:346px;top:3px">月线</div>
<div class="abs" style="left:379px;top:3px">多周期</div>
<div class="abs" style="left:422px;top:3px">更多 &gt;</div>
<div class="vl" style="left:806px;top:0;height:19px"></div>
<div class="vl" style="left:839px;top:0;height:19px"></div>
<div class="vl" style="left:874px;top:0;height:19px"></div>
<div class="vl" style="left:909px;top:0;height:19px"></div>
<div class="vl" style="left:944px;top:0;height:19px"></div>
<div class="vl" style="left:979px;top:0;height:19px"></div>
<div class="vl" style="left:1014px;top:0;height:19px"></div>
<div class="vl" style="left:1049px;top:0;height:19px"></div>
<div class="vl" style="left:1084px;top:0;height:19px"></div>
<div class="vl" style="left:1121px;top:0;height:650px"></div>
<div class="abs" style="left:811px;top:3px">复权</div>
<div class="abs" style="left:845px;top:3px">叠加</div>
<div class="abs" style="left:880px;top:3px">多股</div>
<div class="abs" style="left:915px;top:3px">统计</div>
<div class="abs" style="left:950px;top:3px">画线</div>
<div class="abs" style="left:987px;top:3px">F10</div>
<div class="abs" style="left:1020px;top:3px">标记</div>
<div class="abs" style="left:1052px;top:3px">+自选</div>
<div class="abs" style="left:1090px;top:3px">返回</div>
<!-- title -->
<div class="abs" style="left:2px;top:23px">振华重工(日线.前复权)</div>
<div class="abs" style="left:144px;top:23px;color:#ff2020">MA5: 62.52</div>
<div class="abs" style="left:210px;top:23px;color:#c8c8ff">MA10: 63.79</div>
<div class="abs" style="left:282px;top:23px;color:#00e000">MA20: 133.79</div>
<div class="abs" style="left:361px;top:23px;color:#00e000">MA60: -6.21</div>
<div class="abs" style="left:429px;top:23px;color:#00e000">量龙: 35.84</div>
<div class="abs" style="left:494px;top:23px;color:#4aa0ff">筹龙: 49.74</div>
<!-- axis -->
<div class="vl" style="left:1070px;top:19px;height:612px"></div>
<div class="hl" style="left:0;top:630px;width:1121px"></div>
<div class="hl" style="left:0;top:646px;width:1121px"></div>
<div class="ax" style="right:15px;top:84px">120.0</div>
<div class="ax" style="right:15px;top:119px">110.0</div>
<div class="ax" style="right:15px;top:154px">100.0</div>
<div class="ax" style="right:15px;top:190px">90.00</div>
<div class="ax" style="right:15px;top:225px">80.00</div>
<div class="ax" style="right:15px;top:260px">70.00</div>
<div class="ax" style="right:15px;top:295px">60.00</div>
<div class="ax" style="right:15px;top:331px">50.00</div>
<div class="ax" style="right:15px;top:366px">40.00</div>
<div class="ax" style="right:15px;top:401px">30.00</div>
<div class="ax" style="right:15px;top:436px">20.00</div>
<div class="ax" style="right:15px;top:472px">10.00</div>
<div class="ax" style="right:15px;top:507px">0.00</div>
<!-- icons -->
<svg width="1130" height="40" style="position:absolute;left:0;top:0">
<rect x="5.5" y="3.5" width="11" height="10" rx="2" fill="none" stroke="#8a8a8a" stroke-width="1.2"/>
<rect x="12" y="5" width="3" height="7" fill="#8a8a8a"/>
<circle cx="134" cy="29" r="6.2" fill="#828282"/>
<polyline points="131,27.8 134,30.6 137,27.8" fill="none" stroke="#1a1a1a" stroke-width="1.4"/>
<polygon points="1042.5,24 1048,29.5 1042.5,35 1037,29.5" fill="none" stroke="#8a8a8a" stroke-width="1"/>
<rect x="1055.5" y="24.5" width="11" height="10" rx="2" fill="none" stroke="#8a8a8a" stroke-width="1.2"/>
<rect x="1062" y="26" width="3" height="7" fill="#8a8a8a"/>
</svg>
<!-- price label -->
<div class="abs" style="left:1070px;top:335px;width:51px;height:16px;background:#4a1890"></div>
<div class="abs" style="left:1071px;top:337px;font-size:12.5px;color:#f0f0f0">45.55</div>
<!-- right panel -->
<div class="hl" style="left:1121px;top:25px;width:9px"></div>
<div class="hl" style="left:1121px;top:45px;width:9px"></div>
<div class="abs" style="left:1128px;top:7px;width:2px;height:11px;background:#ff5050"></div>
<div class="abs" style="left:1122px;top:20px;width:8px;height:630px;overflow:hidden"><div style="position:relative;top:-20px"><div class="abs" style="left:1px;top:28px;font-size:15px;color:#e8e8e8">委</div><div class="abs" style="left:1px;top:48.0px;font-size:15px;color:#e8e8e8">卖</div><div class="abs" style="left:1px;top:67.4px;font-size:15px;color:#e8e8e8">卖</div><div class="abs" style="left:1px;top:86.8px;font-size:15px;color:#e8e8e8">卖</div><div class="abs" style="left:1px;top:106.19999999999999px;font-size:15px;color:#e8e8e8">卖</div><div class="abs" style="left:1px;top:125.6px;font-size:15px;color:#e8e8e8">卖</div><div class="abs" style="left:1px;top:145.0px;font-size:15px;color:#e8e8e8">买</div><div class="abs" style="left:1px;top:164.4px;font-size:15px;color:#e8e8e8">买</div><div class="abs" style="left:1px;top:183.8px;font-size:15px;color:#e8e8e8">买</div><div class="abs" style="left:1px;top:203.2px;font-size:15px;color:#e8e8e8">买</div><div class="abs" style="left:1px;top:222.6px;font-size:15px;color:#e8e8e8">买</div><div class="abs" style="left:1px;top:242.0px;font-size:15px;color:#e8e8e8">现</div><div class="abs" style="left:1px;top:261.0px;font-size:15px;color:#e8e8e8">涨</div><div class="abs" style="left:1px;top:280.0px;font-size:15px;color:#e8e8e8">涨</div><div class="abs" style="left:1px;top:299.0px;font-size:15px;color:#e8e8e8">总</div><div class="abs" style="left:1px;top:318.0px;font-size:15px;color:#e8e8e8">外</div><div class="abs" style="left:1px;top:340.0px;font-size:15px;color:#e8e8e8">换</div><div class="abs" style="left:1px;top:358.5px;font-size:15px;color:#e8e8e8">净</div><div class="abs" style="left:1px;top:377.0px;font-size:15px;color:#e8e8e8">收</div><div class="abs" style="left:1px;top:401px;font-size:15px;color:#e0e000">自</div><div class="abs" style="left:1px;top:421px;font-size:15px;color:#e8e8e8">交</div><div class="abs" style="left:1px;top:441.0px;font-size:16px;color:#f0f0f0">1</div><div class="abs" style="left:1px;top:458.8px;font-size:16px;color:#f0f0f0">1</div><div class="abs" style="left:1px;top:476.6px;font-size:16px;color:#f0f0f0">1</div><div class="abs" style="left:1px;top:494.4px;font-size:16px;color:#f0f0f0">1</div><div class="abs" style="left:1px;top:512.2px;font-size:16px;color:#f0f0f0">1</div><div class="abs" style="left:1px;top:530.0px;font-size:16px;color:#f0f0f0">1</div><div class="abs" style="left:1px;top:547.8px;font-size:16px;color:#f0f0f0">1</div><div class="abs" style="left:1px;top:565.6px;font-size:16px;color:#f0f0f0">1</div><div class="abs" style="left:1px;top:583.4px;font-size:16px;color:#f0f0f0">1</div></div></div><div class="hl" style="left:1121px;top:142px;width:9px"></div><div class="hl" style="left:1121px;top:239px;width:9px"></div><div class="hl" style="left:1121px;top:336px;width:9px"></div><div class="hl" style="left:1121px;top:397px;width:9px"></div><div class="hl" style="left:1121px;top:418px;width:9px"></div><div class="hl" style="left:1121px;top:437px;width:9px"></div>
<!-- bottom axis -->
<div class="vl" style="left:65px;top:630px;height:16px"></div><div class="abs" style="left:67px;top:633px;color:#d00000">4</div><div class="vl" style="left:162px;top:630px;height:16px"></div><div class="abs" style="left:164px;top:633px;color:#d00000">5</div><div class="vl" style="left:249px;top:630px;height:16px"></div><div class="abs" style="left:251px;top:633px;color:#d00000">6</div><div class="vl" style="left:342px;top:630px;height:16px"></div><div class="abs" style="left:344px;top:633px;color:#d00000">7</div><div class="vl" style="left:446px;top:630px;height:16px"></div><div class="abs" style="left:448px;top:633px;color:#d00000">8</div><div class="vl" style="left:543px;top:630px;height:16px"></div><div class="abs" style="left:545px;top:633px;color:#d00000">9</div><div class="vl" style="left:723px;top:630px;height:16px"></div><div class="abs" style="left:725px;top:633px;color:#d00000">11</div><div class="vl" style="left:814px;top:630px;height:16px"></div><div class="abs" style="left:816px;top:633px;color:#d00000">12</div><div class="vl" style="left:919px;top:630px;height:16px"></div><div class="abs" style="left:921px;top:633px;color:#d00000">1</div><div class="abs" style="left:2px;top:633px;color:#d00000">2025年</div><div class="vl" style="left:89px;top:631px;height:2px"></div><div class="vl" style="left:114px;top:631px;height:2px"></div><div class="vl" style="left:138px;top:631px;height:2px"></div><div class="vl" style="left:184px;top:631px;height:2px"></div><div class="vl" style="left:206px;top:631px;height:2px"></div><div class="vl" style="left:228px;top:631px;height:2px"></div><div class="vl" style="left:272px;top:631px;height:2px"></div><div class="vl" style="left:295px;top:631px;height:2px"></div><div class="vl" style="left:318px;top:631px;height:2px"></div><div class="vl" style="left:368px;top:631px;height:2px"></div><div class="vl" style="left:394px;top:631px;height:2px"></div><div class="vl" style="left:421px;top:631px;height:2px"></div><div class="vl" style="left:470px;top:631px;height:2px"></div><div class="vl" style="left:495px;top:631px;height:2px"></div><div class="vl" style="left:526px;top:631px;height:2px"></div><div class="vl" style="left:569px;top:631px;height:2px"></div><div class="vl" style="left:594px;top:631px;height:2px"></div><div class="vl" style="left:746px;top:631px;height:2px"></div><div class="vl" style="left:768px;top:631px;height:2px"></div><div class="vl" style="left:792px;top:631px;height:2px"></div><div class="vl" style="left:841px;top:631px;height:2px"></div><div class="vl" style="left:867px;top:631px;height:2px"></div><div class="vl" style="left:893px;top:631px;height:2px"></div><div class="vl" style="left:944px;top:631px;height:2px"></div><div class="vl" style="left:1px;top:647px;height:3px"></div><div class="vl" style="left:42px;top:647px;height:3px"></div><div class="vl" style="left:73px;top:647px;height:3px"></div><div class="vl" style="left:116px;top:647px;height:3px"></div><div class="vl" style="left:144px;top:647px;height:3px"></div><div class="vl" style="left:177px;top:647px;height:3px"></div><div class="vl" style="left:208px;top:647px;height:3px"></div><div class="vl" style="left:242px;top:647px;height:3px"></div><div class="vl" style="left:283px;top:647px;height:3px"></div><div class="vl" style="left:309px;top:647px;height:3px"></div><div class="vl" style="left:332px;top:647px;height:3px"></div><div class="vl" style="left:364px;top:647px;height:3px"></div><div class="vl" style="left:390px;top:647px;height:3px"></div><div class="vl" style="left:423px;top:647px;height:3px"></div><div class="vl" style="left:481px;top:647px;height:3px"></div><div class="vl" style="left:508px;top:647px;height:3px"></div><div class="vl" style="left:569px;top:647px;height:3px"></div><div class="vl" style="left:600px;top:647px;height:3px"></div><div class="vl" style="left:628px;top:647px;height:3px"></div><div class="vl" style="left:664px;top:647px;height:3px"></div><div class="vl" style="left:696px;top:647px;height:3px"></div><div class="vl" style="left:736px;top:647px;height:3px"></div><div class="vl" style="left:767px;top:647px;height:3px"></div><div class="vl" style="left:808px;top:647px;height:3px"></div><div class="vl" style="left:840px;top:647px;height:3px"></div><div class="vl" style="left:871px;top:647px;height:3px"></div><div class="abs" style="left:623px;top:631px;width:79px;height:15px;background:#4a1890"></div><div class="abs" style="left:625px;top:633px;color:#f0f0f0">2025/09/24/三</div><div class="abs" style="left:6px;top:648px;width:1px;height:2px;background:#e0e0e0"></div><div class="abs" style="left:10px;top:648px;width:1px;height:2px;background:#e0e0e0"></div><div class="abs" style="left:16px;top:648px;width:1px;height:2px;background:#e0e0e0"></div><div class="abs" style="left:20px;top:648px;width:1px;height:2px;background:#e0e0e0"></div><div class="abs" style="left:51px;top:648px;width:1px;height:2px;background:#e0e0e0"></div><div class="abs" style="left:828px;top:648px;width:1px;height:2px;background:#e0e0e0"></div><div class="abs" style="left:845px;top:648px;width:6px;height:2px;background:#00c8c8"></div><div class="abs" style="left:855px;top:648px;width:11px;height:2px;background:#00c8c8"></div>
<!-- watermark -->
<div class="abs" style="left:971px;top:600px;width:159px;height:50px;background:#3b3636;border-top:1px solid #474141;border-left:1px solid #474141"></div>
<div class="abs" style="left:1006px;top:606px;font-size:18px;font-weight:bold;color:#f2f2f2">指标公式网</div>
<div class="abs" style="left:994px;top:627px;font-size:16.4px;color:#f0f0f0">www.zbgs3.com</div>

</body></html>
